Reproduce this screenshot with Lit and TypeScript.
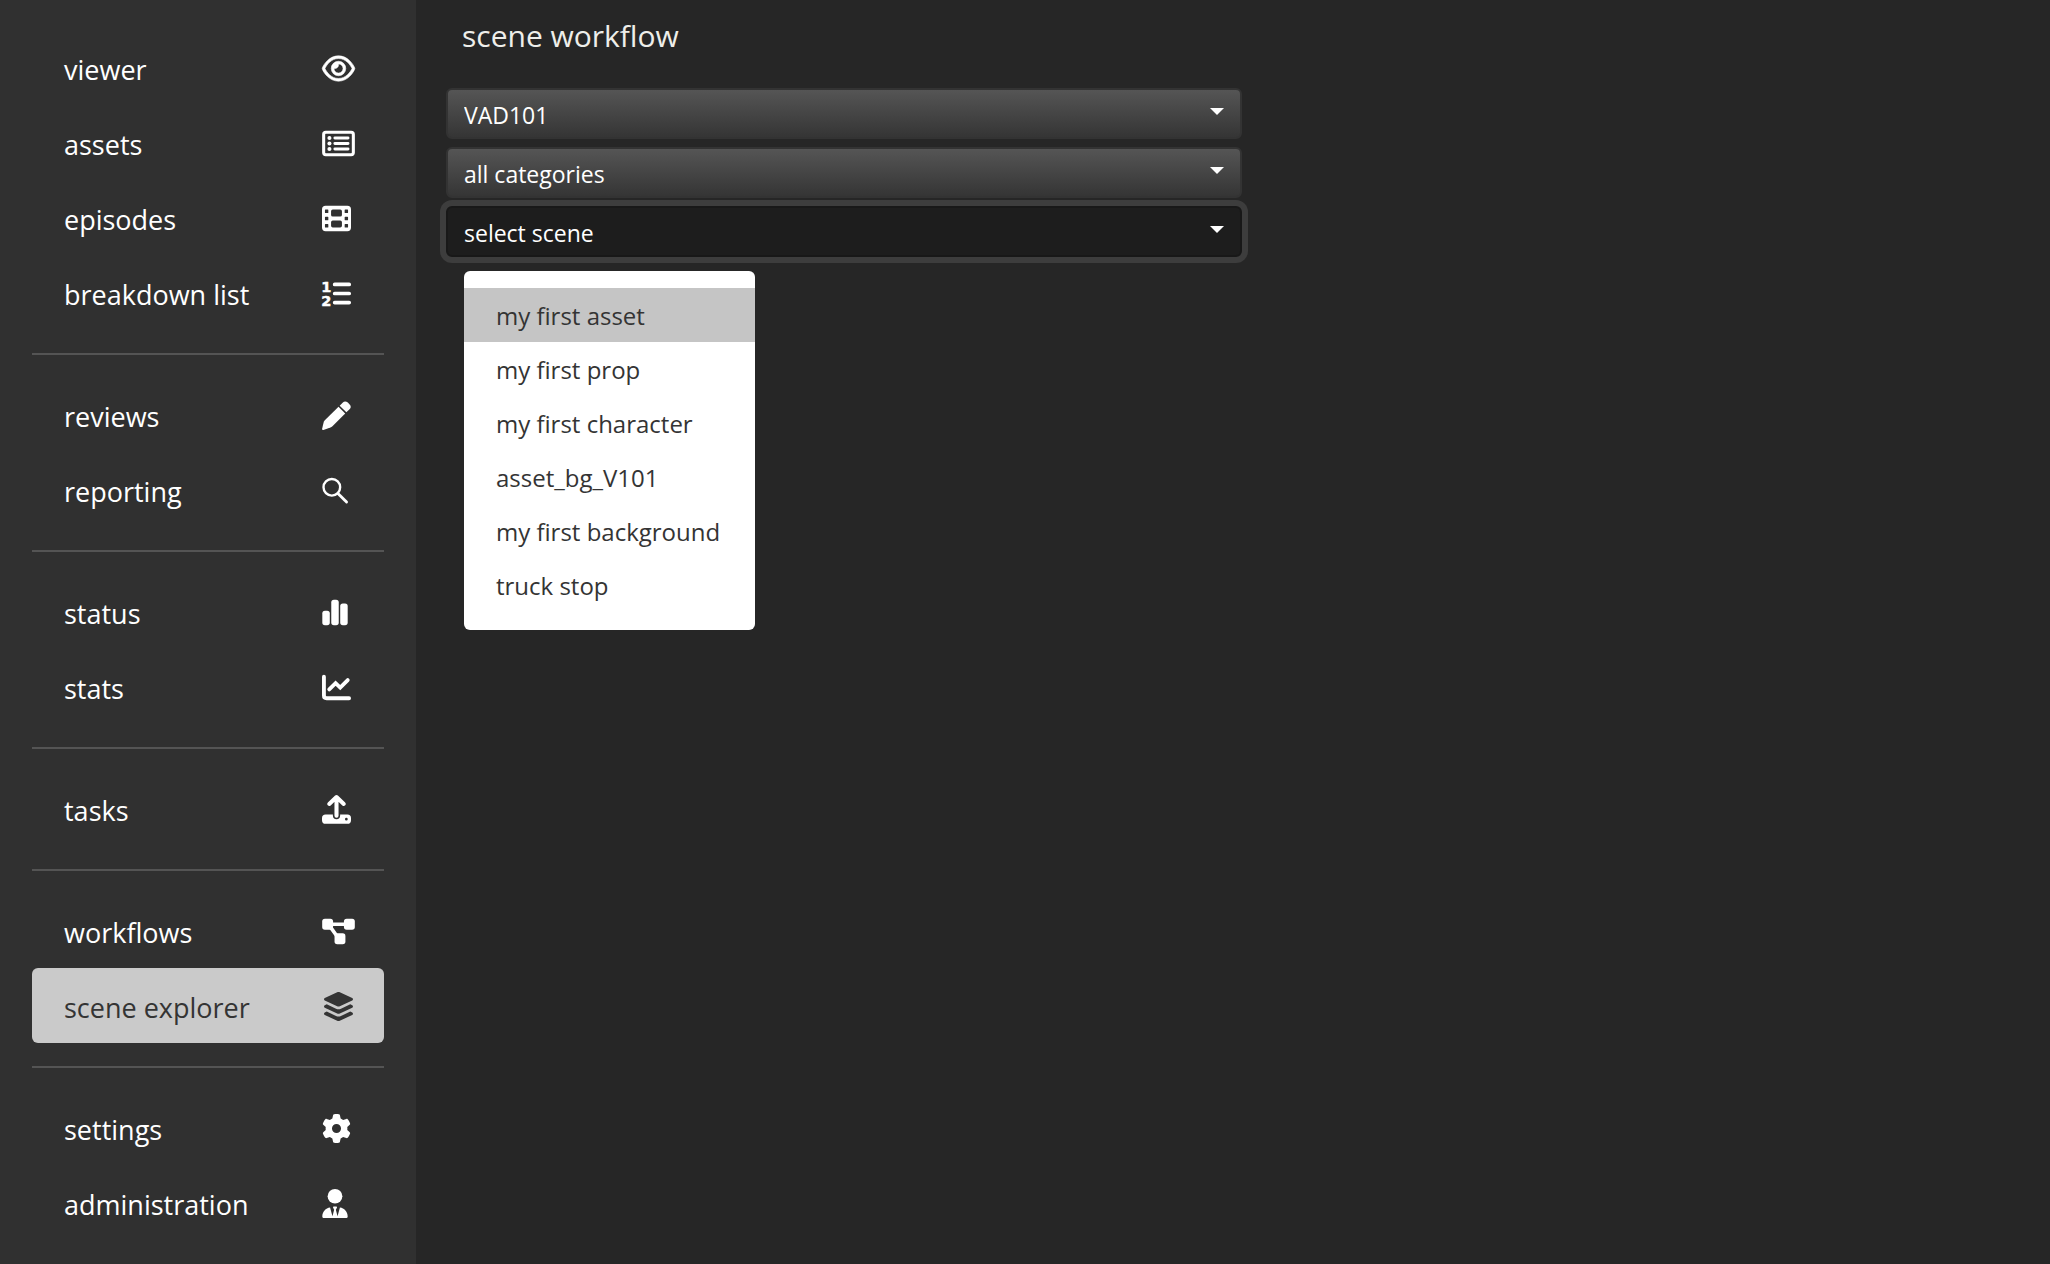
import { LitElement, html, css, svg, nothing, type SVGTemplateResult } from "lit";
import { customElement, property, state } from "lit/decorators.js";
import { classMap } from "lit/directives/class-map.js";

interface Icon {
  box: string;
  size: "wide" | "square" | "narrow";
  art: SVGTemplateResult;
}

const icons: Record<string, Icon> = {
  eye: {
    box: "0 0 576 512",
    size: "wide",
    art: svg`<path stroke="currentColor" stroke-width="10" d="M288 80c-65.2 0-118.8 29.6-159.9 67.7C89.6 183.5 63 226 49.4 256c13.6 30 40.2 72.5 78.6 108.3C169.2 402.4 222.8 432 288 432s118.8-29.6 159.9-67.7C486.4 328.5 513 286 526.6 256c-13.6-30-40.2-72.5-78.6-108.3C406.8 109.6 353.2 80 288 80zM95.4 112.6C142.5 68.8 207.2 32 288 32s145.5 36.8 192.6 80.6c46.8 43.5 78.1 95.4 93 131.1c3.3 7.9 3.3 16.7 0 24.6c-14.9 35.7-46.2 87.7-93 131.1C433.5 443.2 368.8 480 288 480s-145.5-36.8-192.6-80.6C48.6 356 17.3 304 2.5 268.3c-3.3-7.9-3.3-16.7 0-24.6C17.3 208 48.6 156 95.4 112.6zM288 336c44.2 0 80-35.8 80-80s-35.8-80-80-80c-.7 0-1.3 0-2 0c1.3 5.1 2 10.5 2 16c0 35.3-28.7 64-64 64c-5.5 0-10.9-.7-16-2c0 .7 0 1.3 0 2c0 44.2 35.8 80 80 80zm0-208a128 128 0 1 1 0 256 128 128 0 1 1 0-256z"/>`,
  },
  list: {
    box: "0 0 576 512",
    size: "wide",
    art: svg`<rect x="26" y="58" width="524" height="396" rx="38" fill="none" stroke="currentColor" stroke-width="54"/>
      <circle cx="128" cy="160" r="36"/><circle cx="128" cy="256" r="36"/><circle cx="128" cy="352" r="36"/>
      <path d="M224 160H456M224 256H456M224 352H456" fill="none" stroke="currentColor" stroke-width="52" stroke-linecap="round"/>`,
  },
  film: {
    box: "0 0 512 512",
    size: "square",
    art: svg`<path fill-rule="evenodd" d="M64 32H448a64 64 0 0 1 64 64V416a64 64 0 0 1-64 64H64a64 64 0 0 1-64-64V96a64 64 0 0 1 64-64z
      M62 98h40a10 10 0 0 1 10 10v40a10 10 0 0 1-10 10H62a10 10 0 0 1-10-10v-40a10 10 0 0 1 10-10z
      M62 226h40a10 10 0 0 1 10 10v40a10 10 0 0 1-10 10H62a10 10 0 0 1-10-10v-40a10 10 0 0 1 10-10z
      M62 354h40a10 10 0 0 1 10 10v40a10 10 0 0 1-10 10H62a10 10 0 0 1-10-10v-40a10 10 0 0 1 10-10z
      M410 98h40a10 10 0 0 1 10 10v40a10 10 0 0 1-10 10h-40a10 10 0 0 1-10-10v-40a10 10 0 0 1 10-10z
      M410 226h40a10 10 0 0 1 10 10v40a10 10 0 0 1-10 10h-40a10 10 0 0 1-10-10v-40a10 10 0 0 1 10-10z
      M410 354h40a10 10 0 0 1 10 10v40a10 10 0 0 1-10 10h-40a10 10 0 0 1-10-10v-40a10 10 0 0 1 10-10z
      M190 98H322a30 30 0 0 1 30 30v64a30 30 0 0 1-30 30H190a30 30 0 0 1-30-30v-64a30 30 0 0 1 30-30z
      M190 290H322a30 30 0 0 1 30 30v64a30 30 0 0 1-30 30H190a30 30 0 0 1-30-30v-64a30 30 0 0 1 30-30z"/>`,
  },
  numbered: {
    box: "0 0 512 512",
    size: "square",
    art: svg`<path d="M224 96H480M224 256H480M224 416H480" fill="none" stroke="currentColor" stroke-width="66" stroke-linecap="round"/>
      <g font-family="DejaVu Sans" font-weight="700" font-size="256" text-anchor="middle" stroke="currentColor" stroke-width="8"><text x="76" y="222">1</text><text x="76" y="480">2</text></g>`,
  },
  pencil: {
    box: "0 0 512 512",
    size: "square",
    art: svg`<path d="M292 102L410 220L184 446Q168 462 148 470L26 510Q-2 516 2 488L32 366Q38 350 50 338Z"/>
      <path d="M312 82L364 30Q408-14 456 28L484 56Q532 104 482 148L430 200Z"/>`,
  },
  search: {
    box: "0 0 448 512",
    size: "narrow",
    art: svg`<circle cx="168" cy="200" r="147" fill="none" stroke="currentColor" stroke-width="42"/>
      <path d="M276 308L428 460" stroke="currentColor" stroke-width="50" stroke-linecap="round"/>`,
  },
  bars: {
    box: "0 0 448 512",
    size: "narrow",
    art: svg`<rect x="0" y="224" width="132" height="256" rx="46"/><rect x="158" y="32" width="132" height="448" rx="46"/><rect x="316" y="96" width="132" height="384" rx="46"/>`,
  },
  chart: {
    box: "0 0 512 512",
    size: "square",
    art: svg`<path d="M34 64V398Q34 446 82 446H478M128 290L240 180L322 258L454 126" fill="none" stroke="currentColor" stroke-width="68" stroke-linecap="round" stroke-linejoin="miter"/>`,
  },
  upload: {
    box: "0 0 512 512",
    size: "square",
    art: svg`<path fill-rule="evenodd" d="M64 344H192V366Q194 426 256 426Q318 426 320 366V344H448a64 64 0 0 1 64 64V444a64 64 0 0 1-64 64H64a64 64 0 0 1-64-64V408a64 64 0 0 1 64-64zM430 402a24 24 0 1 0 0 48a24 24 0 1 0 0-48z"/>
      <path d="M256 366V48M128 158L256 36L384 158" fill="none" stroke="currentColor" stroke-width="72" stroke-linecap="round" stroke-linejoin="round"/>`,
  },
  nodes: {
    box: "0 0 576 512",
    size: "wide",
    art: svg`<rect x="0" y="32" width="192" height="192" rx="48"/><rect x="384" y="32" width="192" height="192" rx="48"/><rect x="218" y="288" width="192" height="192" rx="48"/>
      <path d="M150 128H430M140 170L262 340" stroke="currentColor" stroke-width="64"/>`,
  },
  layers: {
    box: "-32 0 576 512",
    size: "wide",
    art: svg`<path d="M232.5 5.2c14.9-6.9 32.1-6.9 47 0l218.6 101c8.5 3.9 13.9 12.4 13.9 21.8s-5.4 17.9-13.9 21.8l-218.6 101c-14.9 6.9-32.1 6.9-47 0L13.9 149.8C5.4 145.8 0 137.3 0 128s5.4-17.9 13.9-21.8L232.5 5.2zM48.1 218.4l164.3 75.9c27.7 12.8 59.6 12.8 87.3 0l164.3-75.9 34.1 15.8c8.5 3.9 13.9 12.4 13.9 21.8s-5.4 17.9-13.9 21.8l-218.6 101c-14.9 6.9-32.1 6.9-47 0L13.9 277.8C5.4 273.8 0 265.3 0 256s5.4-17.9 13.9-21.8l34.1-15.8zM13.9 362.2l34.1-15.8 164.3 75.9c27.7 12.8 59.6 12.8 87.3 0l164.3-75.9 34.1 15.8c8.5 3.9 13.9 12.4 13.9 21.8s-5.4 17.9-13.9 21.8l-218.6 101c-14.9 6.9-32.1 6.9-47 0L13.9 405.8C5.4 401.8 0 393.3 0 384s5.4-17.9 13.9-21.8z"/>`,
  },
  gear: {
    box: "0 0 512 512",
    size: "square",
    art: svg`<path d="M495.9 166.6c3.2 8.7 .5 18.4-6.4 24.6l-43.3 39.4c1.1 8.3 1.7 16.8 1.7 25.4s-.6 17.1-1.7 25.4l43.3 39.4c6.9 6.2 9.6 15.9 6.4 24.6c-4.4 11.9-9.7 23.3-15.8 34.3l-4.7 8.1c-6.6 11-14 21.4-22.1 31.2c-5.9 7.2-15.7 9.6-24.5 6.8l-55.7-17.7c-13.4 10.3-28.2 18.9-44 25.4l-12.5 57.1c-2 9.1-9 16.3-18.2 17.8c-13.8 2.3-28 3.5-42.5 3.5s-28.7-1.2-42.5-3.5c-9.2-1.5-16.2-8.7-18.2-17.8l-12.5-57.1c-15.8-6.5-30.6-15.1-44-25.4L83.1 425.9c-8.8 2.8-18.6 .3-24.5-6.8c-8.1-9.8-15.5-20.2-22.1-31.2l-4.7-8.1c-6.1-11-11.4-22.4-15.8-34.3c-3.2-8.7-.5-18.4 6.4-24.6l43.3-39.4C64.6 273.1 64 264.6 64 256s.6-17.1 1.7-25.4L22.4 191.2c-6.9-6.2-9.6-15.9-6.4-24.6c4.4-11.9 9.7-23.3 15.8-34.3l4.7-8.1c6.6-11 14-21.4 22.1-31.2c5.900-7.200 15.700-9.600 24.500-6.800l55.700 17.700c13.400-10.300 28.200-18.900 44-25.400l12.500-57.100c2-9.100 9-16.300 18.200-17.800C227.300 1.200 241.500 0 256 0s28.700 1.200 42.500 3.500c9.200 1.500 16.200 8.700 18.200 17.800l12.500 57.100c15.800 6.500 30.600 15.100 44 25.400l55.700-17.700c8.800-2.800 18.600-.3 24.500 6.800c8.100 9.800 15.500 20.200 22.100 31.200l4.700 8.100c6.100 11 11.400 22.400 15.800 34.300zM256 336a80 80 0 1 0 0-160 80 80 0 1 0 0 160z"/>`,
  },
  user: {
    box: "0 0 448 512",
    size: "narrow",
    art: svg`<circle cx="224" cy="128" r="130"/>
      <path d="M209 368l-18-36c-5-12 1-24 13-24H244c12 0 19 12 14 24l-19 36 30 115 42-157c77 8 137 79 137 158c0 17-14 28-31 28H31C14 512 0 500 0 484c0-79 60-150 137-158l42 157z"/>`,
  },
};

interface NavItem {
  label: string;
  icon: string;
}

const navGroups: NavItem[][] = [
  [
    { label: "viewer", icon: "eye" },
    { label: "assets", icon: "list" },
    { label: "episodes", icon: "film" },
    { label: "breakdown list", icon: "numbered" },
  ],
  [
    { label: "reviews", icon: "pencil" },
    { label: "reporting", icon: "search" },
  ],
  [
    { label: "status", icon: "bars" },
    { label: "stats", icon: "chart" },
  ],
  [{ label: "tasks", icon: "upload" }],
  [
    { label: "workflows", icon: "nodes" },
    { label: "scene explorer", icon: "layers" },
  ],
  [
    { label: "settings", icon: "gear" },
    { label: "administration", icon: "user" },
  ],
];

const scenes = [
  "my first asset",
  "my first prop",
  "my first character",
  "asset_bg_V101",
  "my first background",
  "truck stop",
];

@customElement("side-nav")
export class SideNav extends LitElement {
  @property() current = "";

  static styles = css`
    :host {
      display: block;
      box-sizing: border-box;
      padding: 30px 32px 20px;
      background: #303030;
    }
    .group {
      margin: 0;
      padding: 0;
      list-style: none;
    }
    .group + .group {
      margin-top: 23px;
      padding-top: 22px;
      border-top: 2px solid #545454;
    }
    .link {
      display: grid;
      grid-template-columns: 1fr 34px;
      align-items: center;
      box-sizing: border-box;
      height: 75px;
      padding: 2px 28px 0 32px;
      border-radius: 6px;
      color: #fff;
      font-size: 27px;
      line-height: 36px;
      text-decoration: none;
      white-space: nowrap;
    }
    .label {
      padding-top: 2px;
    }
    .link.current {
      background: #cacaca;
      color: #343434;
    }
    .icon {
      display: block;
      height: 29px;
      overflow: visible;
      fill: currentColor;
    }
    .wide {
      width: 33px;
    }
    .square {
      width: 29px;
    }
    .narrow {
      width: 26px;
    }
  `;

  private renderItem(item: NavItem) {
    const icon = icons[item.icon];
    const current = item.label === this.current;
    return html`<li>
      <a
        class=${classMap({ link: true, current })}
        href="#${item.label.replace(" ", "-")}"
        aria-current=${current ? "page" : nothing}
      >
        <span class="label">${item.label}</span>
        <svg class="icon ${icon.size}" viewBox=${icon.box} aria-hidden="true">${icon.art}</svg>
      </a>
    </li>`;
  }

  render() {
    return html`<nav>
      ${navGroups.map(
        (group) => html`<ul class="group">
          ${group.map((item) => this.renderItem(item))}
        </ul>`
      )}
    </nav>`;
  }
}

@customElement("app-root")
export class AppRoot extends LitElement {
  @state() private highlighted = scenes[0];

  static styles = css`
    :host {
      display: grid;
      grid-template-columns: 416px 1fr;
      min-height: 100vh;
      background: #262626;
      color: #fff;
      font-family: "Open Sans", "Noto Sans", sans-serif;
    }
    .main {
      padding: 16px 12px 32px 30px;
    }
    .title {
      margin: 0 0 32px;
      padding-left: 16px;
      color: #eeeeea;
      font-size: 30px;
      font-weight: 400;
      line-height: 40px;
    }
    .filters {
      display: grid;
      gap: 8px;
      width: 50%;
    }
    .field {
      position: relative;
      display: grid;
    }
    .select {
      grid-area: 1 / 1;
      appearance: none;
      box-sizing: border-box;
      width: 100%;
      height: 51px;
      margin: 0;
      padding: 2px 48px 0 16px;
      border: 2px solid #333;
      border-radius: 6px;
      outline: none;
      background: linear-gradient(#555, #353535);
      color: #fff;
      font-family: inherit;
      font-size: 23px;
      line-height: 32px;
    }
    .select.open {
      border-color: #181818;
      background: #1d1d1d;
      box-shadow: 0 0 0 6px #3d3d3d;
    }
    .caret {
      grid-area: 1 / 1;
      justify-self: end;
      width: 14px;
      height: 7px;
      margin: 20px 18px 0 0;
      fill: #fff;
      pointer-events: none;
    }
    .menu {
      position: absolute;
      top: 65px;
      left: 18px;
      margin: 0;
      padding: 17px 0 18px;
      border-radius: 6px;
      background: #fff;
      list-style: none;
    }
    .option {
      display: block;
      width: 100%;
      height: 54px;
      padding: 2px 35px 0 32px;
      border: 0;
      background: none;
      color: #343434;
      font-family: inherit;
      font-size: 24px;
      line-height: 32px;
      text-align: left;
      white-space: nowrap;
    }
    .option.highlighted {
      background: #c5c5c5;
    }
  `;

  private caret() {
    return html`<svg class="caret" viewBox="0 0 14 7" aria-hidden="true"><path d="M0 0H14L7 7Z" /></svg>`;
  }

  render() {
    return html`
      <side-nav current="scene explorer"></side-nav>
      <main class="main">
        <h1 class="title">scene workflow</h1>
        <div class="filters">
          <div class="field">
            <select class="select" aria-label="episode">
              <option>VAD101</option>
            </select>
            ${this.caret()}
          </div>
          <div class="field">
            <select class="select" aria-label="category">
              <option>all categories</option>
            </select>
            ${this.caret()}
          </div>
          <div class="field">
            <select class="select open" aria-label="scene">
              <option>select scene</option>
            </select>
            ${this.caret()}
            <ul class="menu">
              ${scenes.map(
                (scene) => html`<li>
                  <button
                    type="button"
                    class=${classMap({ option: true, highlighted: scene === this.highlighted })}
                    @mouseenter=${() => (this.highlighted = scene)}
                  >
                    ${scene}
                  </button>
                </li>`
              )}
            </ul>
          </div>
        </div>
      </main>
    `;
  }
}
